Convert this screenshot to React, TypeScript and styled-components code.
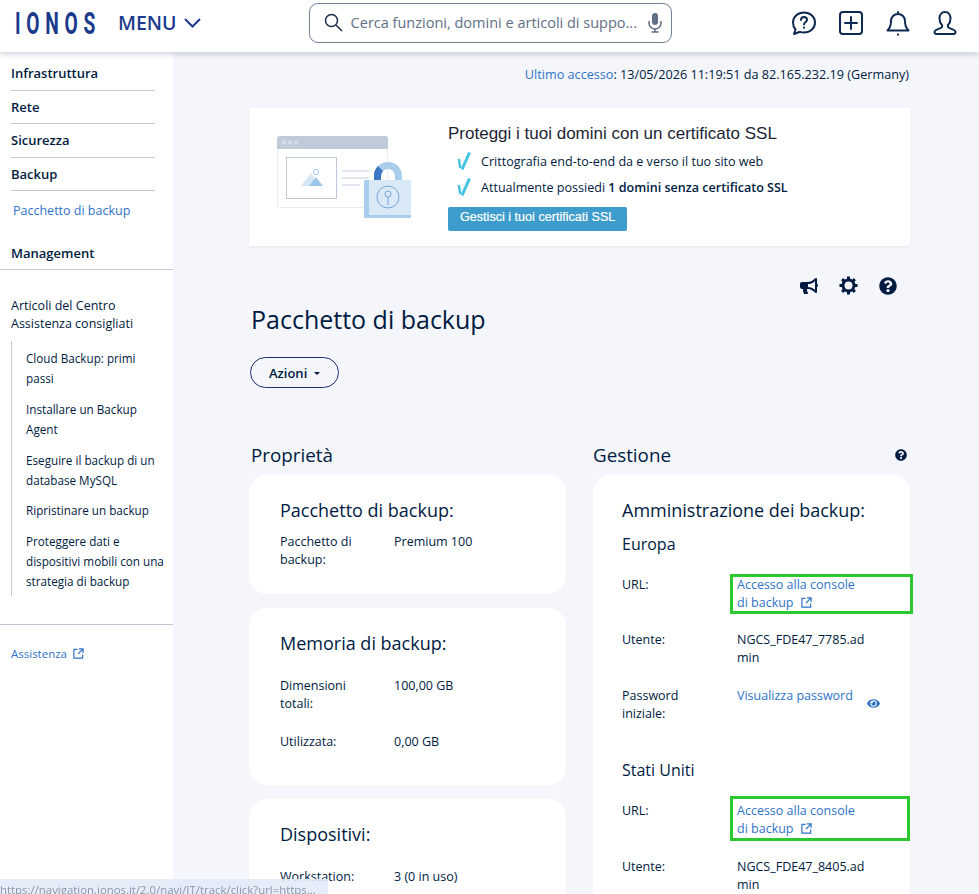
import React from 'react';
import styled, { createGlobalStyle } from 'styled-components';
import { FaBullhorn, FaQuestionCircle, FaEye } from 'react-icons/fa';

const GlobalStyle = createGlobalStyle`
  html, body {
    margin: 0;
    height: 100%;
    overflow: hidden;
  }
  body {
    font-family: "Open Sans", "Liberation Sans", sans-serif;
    color: #001b41;
    background: #f4f6fb;
  }
  * {
    box-sizing: border-box;
  }
`;

const Page = styled.div`
  display: flex;
  flex-direction: column;
  height: 894px;
  overflow: hidden;
`;

const Header = styled.header`
  display: flex;
  align-items: center;
  flex: 0 0 52px;
  padding-bottom: 7px;
  background: #fff;
  box-shadow: 0 2px 6px rgba(0, 27, 65, 0.2);
  position: relative;
  z-index: 2;
`;

const Logo = styled.span`
  width: 81px;
  margin-left: 15px;
  font-family: "Roboto", sans-serif;
  font-weight: 700;
  font-size: 32px;
  line-height: 32px;
  letter-spacing: 9.5px;
  color: #1b3a8c;
  transform: scaleX(0.6);
  transform-origin: left center;
  white-space: nowrap;
`;

const MenuButton = styled.div`
  display: flex;
  align-items: center;
  gap: 7px;
  margin-left: 22px;
  font-size: 19.5px;
  font-weight: 600;
  color: #1b3a8c;
`;

const SearchBox = styled.div`
  display: flex;
  align-items: center;
  width: 363px;
  height: 40px;
  margin-left: 108px;
  padding: 0 9px 0 14px;
  border: 1px solid #718095;
  border-radius: 9px;
`;

const SearchText = styled.span`
  flex: 1;
  margin-left: 8px;
  font-size: 14.5px;
  color: #5f6f86;
  white-space: nowrap;
`;

const HeaderIcons = styled.div`
  display: flex;
  align-items: center;
  gap: 19px;
  margin-left: 118px;
`;

const Body = styled.div`
  display: flex;
  flex: 1;
  min-height: 0;
`;

const Sidebar = styled.aside`
  flex: 0 0 173px;
  background: #fff;
  padding-top: 5px;
  font-size: 13px;
`;

const NavItem = styled.div`
  height: 33.6px;
  margin: 0 18px 0 11px;
  padding-top: 7px;
  font-weight: 600;
  line-height: 18px;
  border-bottom: 1px solid #bfc8d8;
`;

const NavLink = styled.a`
  display: block;
  margin: 11px 0 0 13px;
  font-size: 12.5px;
  line-height: 18px;
  color: #2f73c9;
`;

const NavManagement = styled.div`
  margin-top: 24px;
  padding: 0 0 7px 11px;
  font-weight: 600;
  line-height: 18px;
  border-bottom: 1px solid #bfc8d8;
`;

const AdviceTitle = styled.div`
  margin: 27px 0 0 11px;
  line-height: 18px;
  font-size: 12.5px;
`;

const AdviceList = styled.div`
  display: flex;
  flex-direction: column;
  gap: 10.6px;
  margin: 8px 0 0 11px;
  padding: 7px 8px 5px 14px;
  border-left: 1px solid #bfc8d8;
`;

const AdviceItem = styled.div`
  font-size: 11.7px;
  line-height: 20px;
`;

const SideFooter = styled.div`
  display: flex;
  align-items: center;
  gap: 6px;
  margin-top: 28px;
  padding: 20px 0 0 11px;
  border-top: 1px solid #bfc8d8;
  font-size: 11.5px;
  line-height: 18px;
  color: #2f73c9;
`;

const Main = styled.main`
  flex: 1;
  padding: 0 69px 0 76px;
  min-width: 0;
`;

const LastAccess = styled.div`
  margin-top: 12.5px;
  padding-right: 1px;
  text-align: right;
  font-size: 12.65px;
  line-height: 18px;
  span {
    color: #2f73c9;
  }
`;

const Banner = styled.section`
  display: flex;
  height: 138px;
  margin-top: 25.5px;
  padding: 28px 0 0 28px;
  background: #fff;
  box-shadow: 0 1px 2px rgba(0, 27, 65, 0.06);
`;

const BannerBody = styled.div`
  margin-left: 35px;
`;

const BannerTitle = styled.div`
  margin-top: -16px;
  font-family: "Liberation Sans", sans-serif;
  font-size: 17px;
  line-height: 28px;
  color: #1c2533;
`;

const BannerLine = styled.div`
  display: flex;
  align-items: center;
  gap: 10px;
  height: 26px;
  margin-left: 9px;
  font-size: 12.55px;
  b {
    font-weight: 600;
  }
`;

const BannerButton = styled.div`
  width: 179px;
  height: 24px;
  margin-top: 7px;
  padding-left: 12px;
  background: #3d9ccc;
  border-radius: 2px;
  color: #fff;
  font-family: "Liberation Sans", sans-serif;
  font-size: 12.6px;
  line-height: 21px;
  -webkit-text-stroke: 0.2px #fff;
`;

const ToolIcons = styled.div`
  display: flex;
  justify-content: flex-end;
  align-items: center;
  gap: 21px;
  margin-top: 30px;
  padding-right: 13px;
  font-size: 18px;
  line-height: 18px;
  color: #001b41;
  svg {
    display: block;
  }
`;

const Title = styled.h1`
  margin: 7px 0 0 2px;
  font-size: 25px;
  line-height: 34px;
  font-weight: 400;
`;

const ActionButton = styled.div`
  display: inline-flex;
  align-items: center;
  gap: 7px;
  height: 31px;
  margin-top: 21px;
  margin-left: 1px;
  padding: 0 18px;
  border: 1px solid #1b2f6b;
  border-radius: 16px;
  font-size: 13px;
  font-weight: 600;
`;

const Caret = styled.span`
  width: 0;
  height: 0;
  margin-top: 2px;
  border-left: 3.5px solid transparent;
  border-right: 3.5px solid transparent;
  border-top: 3.5px solid #001b41;
`;

const Columns = styled.div`
  display: grid;
  grid-template-columns: 317px 317px;
  gap: 27px;
  margin-top: 54px;
`;

const Column = styled.div`
  display: flex;
  flex-direction: column;
  gap: 14px;
`;

const ColumnHead = styled.div`
  display: flex;
  align-items: center;
  justify-content: space-between;
  height: 26px;
  margin: 0 3px -7px 2px;
  font-size: 18.8px;
  color: #001b41;
`;

const GestioneHead = styled(ColumnHead)`
  margin-left: 0;
`;

const Card = styled.div<{ $height: number; $inset: number }>`
  padding: 22px 29px 0 ${p => p.$inset}px;
  background: #fff;
  border-radius: 18px;
  min-height: ${p => p.$height}px;
`;

const CardTitle = styled.h3<{ $gap: number }>`
  margin: 0 0 ${p => p.$gap}px;
  font-size: 18px;
  line-height: 26px;
  font-weight: 400;
`;

const RegionTitle = styled.h4`
  margin: -6px 0 20px;
  font-size: 16px;
  line-height: 24px;
  font-weight: 400;
`;

const Row = styled.div<{ $labelWidth: number; $gap: number }>`
  display: grid;
  grid-template-columns: ${p => p.$labelWidth}px 1fr;
  margin-bottom: ${p => p.$gap}px;
  font-size: 12.5px;
  line-height: 18px;
`;

const RowValue = styled.div`
  max-width: 132px;
  word-break: break-all;
`;

const Link = styled.a`
  color: #2f73c9;
`;

const LinkBox = styled.div<{ $top: number; $w: number; $h: number }>`
  position: relative;
  width: 140px;
  line-height: 18px;
  color: #2f73c9;
  &::after {
    content: '';
    position: absolute;
    box-sizing: border-box;
    left: -7px;
    top: ${p => p.$top}px;
    width: ${p => p.$w}px;
    height: ${p => p.$h}px;
    border: 3px solid #2bc92f;
  }
`;

const ExternalWrap = styled.span`
  margin-left: 7px;
`;

const EyeWrap = styled.span`
  position: absolute;
  left: 867px;
  top: 697px;
  font-size: 13px;
  line-height: 13px;
  color: #2a6fc0;
`;

const StatusBar = styled.div`
  position: fixed;
  left: 0;
  bottom: 0;
  width: 328px;
  height: 15px;
  background: rgba(225, 235, 247, 0.9);
  color: #8b98ad;
  font-family: "Open Sans", sans-serif;
  font-size: 11.4px;
  line-height: 21px;
  white-space: nowrap;
  overflow: hidden;
  z-index: 3;
`;

const NavyIcon = ({ children }: { children: React.ReactNode }) => (
  <svg width="28" height="28" viewBox="0 0 28 28" fill="none" stroke="#0f2a52" strokeWidth="2" strokeLinecap="round" strokeLinejoin="round">
    {children}
  </svg>
);

const ExternalIcon = ({ size = 11 }: { size?: number }) => (
  <svg width={size} height={size} viewBox="0 0 12 12" fill="none" stroke="#2f73c9" strokeWidth="1.3" style={{ verticalAlign: '-1px' }}>
    <path d="M5 1.500H1v9.500h9.500V7" />
    <path d="M6.500 1h4.500v4.500M11 1 5.500 6.500" />
  </svg>
);

const Check = () => (
  <svg width="14" height="20" viewBox="0 0 14 20">
    <path d="M5 18.500 12.500 1.500" stroke="#45c3e3" strokeWidth="3" fill="none" />
    <path d="M1.800 8 3.300 17" stroke="#45c3e3" strokeWidth="2.400" fill="none" />
  </svg>
);

const Gear = () => (
  <svg width="19" height="19" viewBox="0 0 19 19" fill="none" stroke="#001b41">
    <circle cx="9.500" cy="9.500" r="5.500" strokeWidth="3" />
    <path d="M9.500 0.500v3M9.500 15.500v3M0.500 9.500h3M15.500 9.500h3M3.100 3.100l2.100 2.100M13.800 13.800l2.100 2.100M3.100 15.900l2.100-2.100M13.800 5.200l2.100-2.100" strokeWidth="3" />
  </svg>
);

const BannerArt = () => (
  <svg width="136" height="84" viewBox="0 0 136 84">
    <rect x="0.500" y="0.500" width="110" height="71" rx="2" fill="#fff" stroke="#e8ecf3" />
    <path d="M0 3a3 3 0 0 1 3-3h105a3 3 0 0 1 3 3v10H0z" fill="#bfcbd9" />
    <circle cx="7" cy="6.500" r="1.600" fill="none" stroke="#e8edf3" />
    <circle cx="13" cy="6.500" r="1.600" fill="none" stroke="#e8edf3" />
    <circle cx="19" cy="6.500" r="1.600" fill="none" stroke="#e8edf3" />
    <rect x="9.500" y="21.500" width="50" height="41" fill="#fff" stroke="#bcc8d8" />
    <path d="M24 50l10-13 9 13z" fill="#d5e6f4" />
    <path d="M32 50l7-9 7 9z" fill="#9cc6e8" />
    <circle cx="39" cy="36" r="2.600" fill="#fff" stroke="#9cc6e8" />
    <path d="M65 35h27M65 42h27M65 49h18" stroke="#e0e6ee" strokeWidth="2" />
    <path d="M100.500 44V40a10.500 10.500 0 0 1 21 0v4" fill="none" stroke="#a9cdec" strokeWidth="7" />
    <path d="M100.500 44V40a10.500 10.500 0 0 1 3-7.500" fill="none" stroke="#3d78c6" strokeWidth="7" />
    <rect x="87" y="44" width="47" height="38" rx="1" fill="#a9cdec" />
    <rect x="92" y="44" width="42" height="35" fill="#d9e9f7" />
    <circle cx="111" cy="61" r="11" fill="none" stroke="#7aa6d8" />
    <circle cx="111" cy="58" r="3" fill="none" stroke="#7aa6d8" />
    <path d="M111 61v8" stroke="#7aa6d8" />
  </svg>
);

const ConsoleLink = ({ top, w, h }: { top: number; w: number; h: number }) => (
  <LinkBox $top={top} $w={w} $h={h}>
    Accesso alla console
    <br />
    di backup
    <ExternalWrap>
      <ExternalIcon />
    </ExternalWrap>
  </LinkBox>
);

export default function App() {
  return (
    <Page>
      <GlobalStyle />
      <Header>
        <Logo>IONOS</Logo>
        <MenuButton>
          MENU
          <svg width="17" height="10" viewBox="0 0 17 10" fill="none" stroke="#1b3a8c" strokeWidth="2">
            <path d="M1 1l7.500 7.500L16 1" />
          </svg>
        </MenuButton>
        <SearchBox>
          <svg width="19" height="19" viewBox="0 0 19 19" fill="none" stroke="#1c2d4a" strokeWidth="1.500">
            <circle cx="7.500" cy="7.500" r="6" />
            <path d="M12 12l6 6" />
          </svg>
          <SearchText>Cerca funzioni, domini e articoli di suppo...</SearchText>
          <svg width="14" height="20" viewBox="0 0 14 20" fill="#5f6f86">
            <rect x="4" y="0" width="6" height="12" rx="3" />
            <path d="M1 8v2a6 6 0 0 0 12 0V8" fill="none" stroke="#5f6f86" strokeWidth="1.500" />
            <path d="M7 16v3M3.500 19h7" fill="none" stroke="#5f6f86" strokeWidth="1.500" />
          </svg>
        </SearchBox>
        <HeaderIcons>
          <NavyIcon>
            <path d="M14 3.500c6 0 11 4 11 10s-5 10-11 10c-1.500 0-3-.2-4-.7L4 25l1.500-4.500C3.800 18.500 3 16.200 3 13.500c0-6 5-10 11-10z" />
            <path d="M11 11c0-1.700 1.300-3 3-3s3 1.200 3 2.800c0 2.500-3 2.500-3 4.700" />
            <path d="M14 18.500v.2" />
          </NavyIcon>
          <NavyIcon>
            <rect x="3" y="3" width="22" height="22" rx="3" />
            <path d="M14 8v12M8 14h12" />
          </NavyIcon>
          <NavyIcon>
            <path d="M14 3v2M14 5c-4 0-7 3-7 7 0 5-1 7-3.500 9.500h21C22 19 21 17 21 12c0-4-3-7-7-7z" />
            <path d="M14 25.500v.2" />
          </NavyIcon>
          <NavyIcon>
            <path d="M14 3c-3.500 0-5.500 3-5.500 6.500 0 3 1 5 2.500 6.500v2c0 1.500-7.500 2-7.500 5 0 1.300.8 2 2 2h17c1.200 0 2-.7 2-2 0-3-7.500-3.500-7.500-5v-2c1.500-1.500 2.500-3.500 2.500-6.500C19.500 6 17.500 3 14 3z" />
          </NavyIcon>
        </HeaderIcons>
      </Header>
      <Body>
        <Sidebar>
          <NavItem>Infrastruttura</NavItem>
          <NavItem>Rete</NavItem>
          <NavItem>Sicurezza</NavItem>
          <NavItem>Backup</NavItem>
          <NavLink>Pacchetto di backup</NavLink>
          <NavManagement>Management</NavManagement>
          <AdviceTitle>
            Articoli del Centro
            <br />
            Assistenza consigliati
          </AdviceTitle>
          <AdviceList>
            <AdviceItem>Cloud Backup: primi passi</AdviceItem>
            <AdviceItem>Installare un Backup Agent</AdviceItem>
            <AdviceItem>Eseguire il backup di un database MySQL</AdviceItem>
            <AdviceItem>Ripristinare un backup</AdviceItem>
            <AdviceItem>Proteggere dati e dispositivi mobili con una strategia di backup</AdviceItem>
          </AdviceList>
          <SideFooter>
            Assistenza <ExternalIcon />
          </SideFooter>
        </Sidebar>
        <Main>
          <LastAccess>
            <span>Ultimo accesso</span>: 13/05/2026 11:19:51 da 82.165.232.19 (Germany)
          </LastAccess>
          <Banner>
            <BannerArt />
            <BannerBody>
              <BannerTitle>Proteggi i tuoi domini con un certificato SSL</BannerTitle>
              <BannerLine>
                <Check />
                Crittografia end-to-end da e verso il tuo sito web
              </BannerLine>
              <BannerLine>
                <Check />
                <span>
                  Attualmente possiedi <b>1 domini senza certificato SSL</b>
                </span>
              </BannerLine>
              <BannerButton>Gestisci i tuoi certificati SSL</BannerButton>
            </BannerBody>
          </Banner>
          <ToolIcons>
            <FaBullhorn />
            <Gear />
            <FaQuestionCircle />
          </ToolIcons>
          <Title>Pacchetto di backup</Title>
          <ActionButton>
            Azioni
            <Caret />
          </ActionButton>
          <Columns>
            <Column>
              <ColumnHead>Proprietà</ColumnHead>
              <Card $height={119} $inset={31}>
                <CardTitle $gap={10}>Pacchetto di backup:</CardTitle>
                <Row $labelWidth={114} $gap={0}>
                  <div>
                    Pacchetto di
                    <br />
                    backup:
                  </div>
                  <div>Premium 100</div>
                </Row>
              </Card>
              <Card $height={177} $inset={31}>
                <CardTitle $gap={21}>Memoria di backup:</CardTitle>
                <Row $labelWidth={114} $gap={20}>
                  <div>
                    Dimensioni
                    <br />
                    totali:
                  </div>
                  <div>100,00 GB</div>
                </Row>
                <Row $labelWidth={114} $gap={0}>
                  <div>Utilizzata:</div>
                  <div>0,00 GB</div>
                </Row>
              </Card>
              <Card $height={200} $inset={31}>
                <CardTitle $gap={21}>Dispositivi:</CardTitle>
                <Row $labelWidth={114} $gap={0}>
                  <div>Workstation:</div>
                  <div>3 (0 in uso)</div>
                </Row>
              </Card>
            </Column>
            <Column>
              <GestioneHead>
                Gestione
                <FaQuestionCircle size={12} />
              </GestioneHead>
              <Card $height={500} $inset={29}>
                <CardTitle $gap={15}>Amministrazione dei backup:</CardTitle>
                <RegionTitle>Europa</RegionTitle>
                <Row $labelWidth={115} $gap={19}>
                  <div>URL:</div>
                  <ConsoleLink top={-2} w={183} h={40} />
                </Row>
                <Row $labelWidth={115} $gap={20}>
                  <div>Utente:</div>
                  <RowValue>NGCS_FDE47_7785.admin</RowValue>
                </Row>
                <Row $labelWidth={115} $gap={41}>
                  <div>
                    Password
                    <br />
                    iniziale:
                  </div>
                  <Link>Visualizza password</Link>
                </Row>
                <RegionTitle>Stati Uniti</RegionTitle>
                <Row $labelWidth={115} $gap={20}>
                  <div>URL:</div>
                  <ConsoleLink top={-6} w={180} h={45} />
                </Row>
                <Row $labelWidth={115} $gap={0}>
                  <div>Utente:</div>
                  <RowValue>NGCS_FDE47_8405.admin</RowValue>
                </Row>
              </Card>
            </Column>
          </Columns>
        </Main>
      </Body>
      <EyeWrap>
        <FaEye />
      </EyeWrap>
      <StatusBar>https://navigation.ionos.it/2.0/navi/IT/track/click?url=https...</StatusBar>
    </Page>
  );
}
